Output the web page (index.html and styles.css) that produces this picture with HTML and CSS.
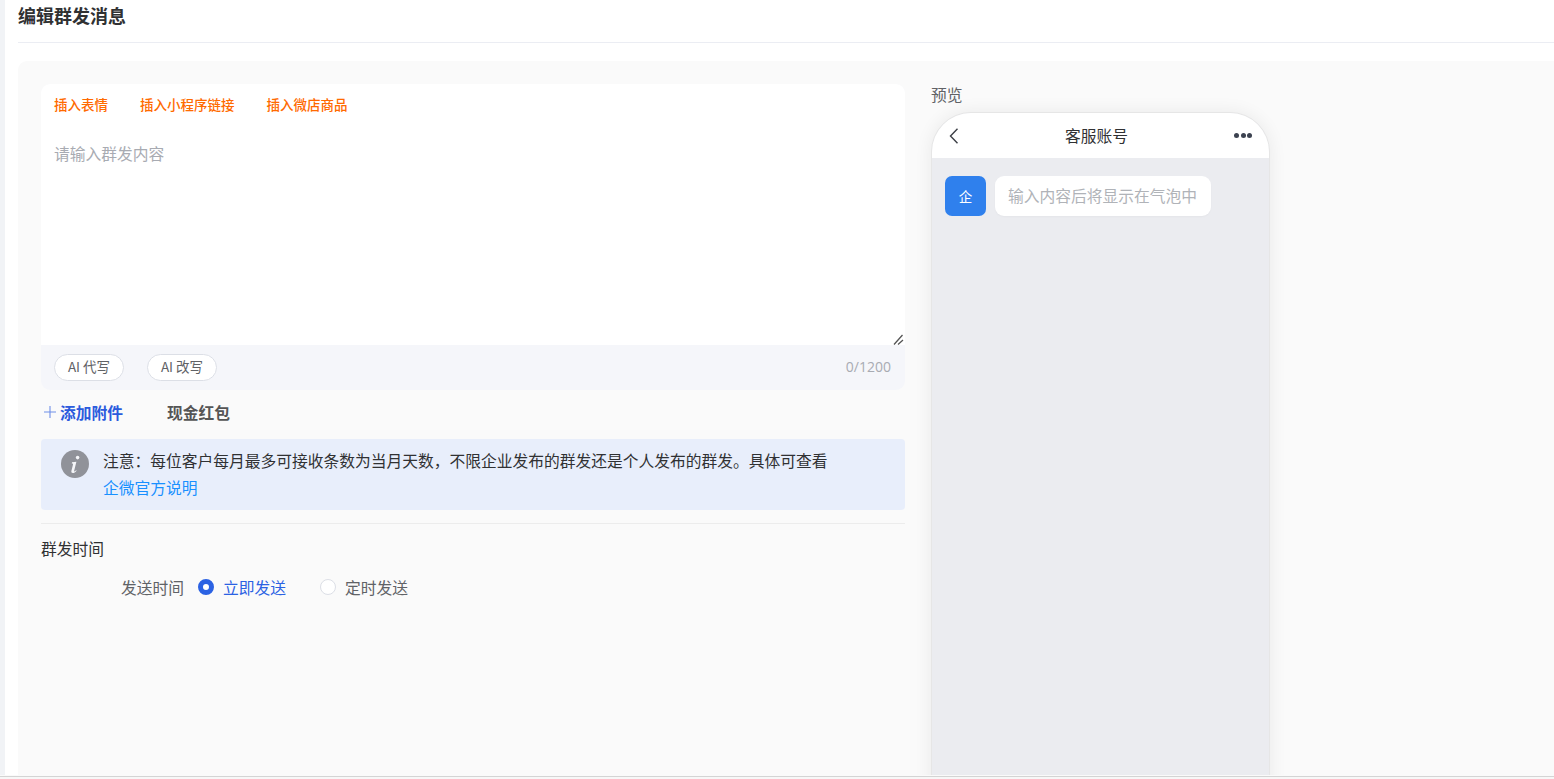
FILE: index.html
```html
<!DOCTYPE html>
<html lang="zh-CN">
<head>
<meta charset="utf-8">
<title>编辑群发消息</title>
<link rel="stylesheet" href="styles.css">
</head>
<body>
<div class="viewport">
  <main class="page">
    <header class="page-head"><h1 class="page-title">编辑群发消息</h1></header>
    <section class="card">
      <div class="form-col">
        <div class="editor">
          <div class="editor-tools">
            <a class="tool">插入表情</a>
            <a class="tool">插入小程序链接</a>
            <a class="tool">插入微店商品</a>
          </div>
          <textarea class="editor-input" placeholder="请输入群发内容"></textarea>
          <div class="editor-foot">
            <div class="pills">
              <button class="pill">AI 代写</button>
              <button class="pill">AI 改写</button>
            </div>
            <span class="counter">0/1200</span>
          </div>
        </div>
        <div class="attach-row">
          <a class="attach">
            <svg class="plus" viewBox="0 0 12 12" width="12" height="12"><path d="M6 0v12M0 6h12" stroke="#6f8fe8" stroke-width="1.1" fill="none"/></svg>
            添加附件
          </a>
          <a class="cash">现金红包</a>
        </div>
        <div class="notice">
          <svg class="notice-icon" viewBox="0 0 28 28" width="28" height="28">
            <circle cx="14" cy="14" r="14" fill="#909299"/>
            <circle cx="16.6" cy="7.6" r="1.8" fill="#f4f5f8"/>
            <path d="M11 12.3l4.400-.6-2.300 9.300c-.1.500.3.600.7.300l1.400-1 .4.400c-1.300 1.500-2.500 2.400-3.800 2.400-1.200 0-1.700-.8-1.400-2l1.600-6.700c.1-.5-.1-.8-.6-.8h-.6z" fill="#f4f5f8"/>
          </svg>
          <div class="notice-text">
            <div>注意：每位客户每月最多可接收条数为当月天数，不限企业发布的群发还是个人发布的群发。具体可查看</div>
            <a class="notice-link">企微官方说明</a>
          </div>
        </div>
        <div class="send-time">
          <div class="section-label">群发时间</div>
          <div class="radio-row">
            <span class="radio-label">发送时间</span>
            <label class="radio radio-on"><span class="dot"></span>立即发送</label>
            <label class="radio"><span class="dot"></span>定时发送</label>
          </div>
        </div>
      </div>
      <aside class="preview-col">
        <div class="preview-label">预览</div>
        <div class="phone">
          <div class="phone-head">
            <svg class="back" viewBox="0 0 10 16" width="10" height="16"><path d="M8.500 .8 1.500 8l7 7.200" stroke="#3c3f46" stroke-width="1.400" fill="none"/></svg>
            <span class="phone-title">客服账号</span>
            <span class="more"><i></i><i></i><i></i></span>
          </div>
          <div class="phone-body">
            <div class="avatar">企</div>
            <div class="bubble">输入内容后将显示在气泡中</div>
          </div>
        </div>
      </aside>
    </section>
  </main>
</div>
</body>
</html>
```
FILE: styles.css
```css
* { box-sizing: border-box; }
html, body { margin: 0; height: 100%; overflow: hidden; background: #f7f7f7; }
body { font-family: "Noto Sans CJK SC", "Noto Sans", sans-serif; color: #333; }
a { text-decoration: none; }
.viewport { height: 777px; background: #fafafa; border-bottom: 1px solid #d4d4d4; overflow: hidden; }
.page { height: 775px; background: #fff; border-left: 5px solid #f1f3f6; padding-left: 13px; display: flex; flex-direction: column; overflow: hidden; }
.page-head { height: 43px; border-bottom: 1px solid #ebedf3; flex: none; }
.page-title { margin: 0; font-size: 18px; line-height: 31px; font-weight: 700; color: #303133; }
.card { flex: 1; min-height: 0; margin-top: 18px; background: #fafafa; border-radius: 9px 0 0 0; padding: 23px 0 0 23px; display: flex; gap: 26px; }
.form-col { width: 864px; flex: none; }
.editor { border-radius: 9px; overflow: hidden; background: #f5f6fa; }
.editor-tools { height: 40px; background: #fff; display: flex; gap: 32px; padding: 11px 0 0 13px; }
.tool { font-size: 13.500px; line-height: 18px; font-weight: 500; color: #ff6a00; }
.editor-input { display: block; width: 100%; height: 221px; border: 0; outline: 0; margin: 0; padding: 18px 13px; background: #fff; font: 15.750px/24px "Noto Sans CJK SC", sans-serif; resize: vertical; }
.editor-input::placeholder { color: #a8abb2; opacity: 1; }
.editor-input::-webkit-resizer { background: url("data:image/svg+xml,%3Csvg xmlns='http://www.w3.org/2000/svg' width='15' height='15'%3E%3Cpath d='M4 14.500 12.500 5M8 14.500 13 10' stroke='%23555' stroke-width='1.300' fill='none'/%3E%3C/svg%3E") no-repeat; }
.editor-foot { height: 45px; padding: 9px 14px 0 13px; display: flex; justify-content: space-between; }
.pills { display: flex; gap: 23px; }
.pill { width: 70px; height: 27px; padding: 0 0 3px; border: 1px solid #dcdfe6; border-radius: 14px; background: #fff; font: 13.500px/22px "Noto Sans CJK SC", sans-serif; color: #606266; }
.counter { font: 14px/25px "Open Sans", sans-serif; color: #a8abb2; }
.attach-row { height: 49px; display: flex; align-items: center; padding: 0 0 5px 3px; gap: 44px; font-size: 15.750px; font-weight: 700; }
.attach { color: #2b5bdd; display: flex; align-items: center; gap: 4px; }
.cash { color: #555; }
.notice { height: 71px; background: #e8eefb; border-radius: 4px; display: flex; gap: 14px; padding: 11px 0 0 20px; }
.notice-icon { flex: none; }
.notice-text { font-size: 15.750px; line-height: 27px; color: #303133; margin-top: -3px; }
.notice-link { color: #1890ff; }
.send-time { margin-top: 13px; border-top: 1px solid #ececec; padding-top: 13px; }
.section-label { font-size: 15.750px; line-height: 24px; color: #303133; }
.radio-row { margin-top: 14px; padding-left: 80px; display: flex; align-items: center; height: 24px; font-size: 15.750px; color: #606266; }
.radio-label { margin-right: 14px; }
.radio { display: flex; align-items: center; gap: 9px; margin-right: 34px; }
.dot { width: 16px; height: 16px; border: 1px solid #dcdfe6; border-radius: 50%; background: #fff; flex: none; }
.radio-on { color: #2b62e3; }
.radio-on .dot { border: 5px solid #2b62e3; }
.preview-col { width: 339px; flex: none; }
.preview-label { font-size: 15.750px; line-height: 24px; color: #606266; margin-top: -1px; }
.phone { height: 700px; margin-top: 5px; border-radius: 40px 40px 0 0; overflow: hidden; border: 1px solid #e6e6e6; background: #ebecf0; box-shadow: 0 0 18px rgba(0,0,0,.07); }
.phone-head { height: 45px; background: #fff; display: flex; align-items: center; justify-content: space-between; padding: 0 17px; }
.phone-title { font-size: 15.750px; color: #303133; }
.more { display: flex; gap: 1.500px; }
.more i { width: 5px; height: 5px; border-radius: 50%; background: #3c4250; }
.phone-body { display: flex; align-items: flex-start; gap: 9px; padding: 18px 0 0 13px; }
.avatar { width: 41px; height: 40px; border-radius: 7px; background: #2f80ed; color: #fff; font-size: 13.500px; display: flex; align-items: center; justify-content: center; }
.bubble { width: 216px; height: 40px; border-radius: 9px; background: #fff; font-size: 15.750px; line-height: 40px; color: #b0b3b8; padding-left: 13px; white-space: nowrap; box-shadow: 0 1px 2px rgba(0,0,0,.03); }
```
